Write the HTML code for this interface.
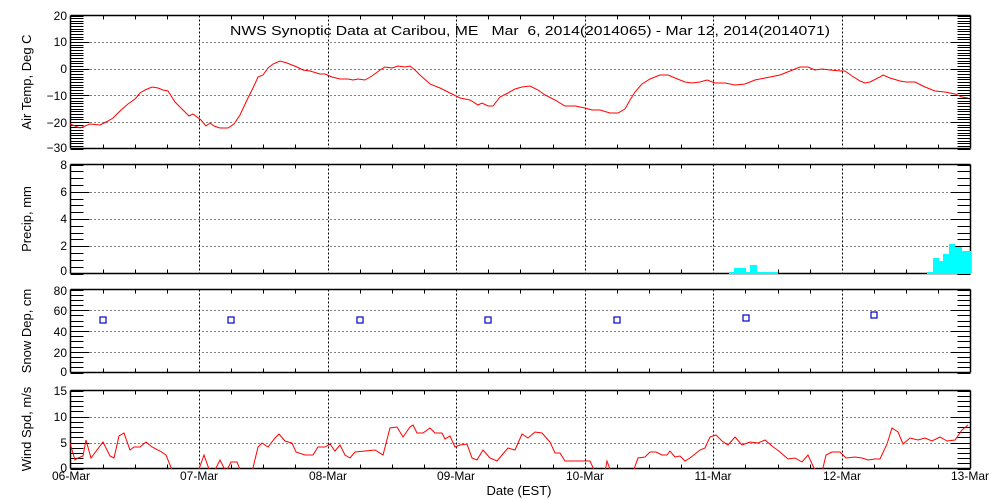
<!DOCTYPE html>
<html><head><meta charset="utf-8"><style>
html,body{margin:0;padding:0;background:#fff;}
svg{display:block;font-family:"Liberation Sans",sans-serif;}
text{font-size:12px;fill:#000;}
</style></head><body>
<svg id="s" width="1000" height="500" xmlns="http://www.w3.org/2000/svg">
<defs>
<clipPath id="c1"><rect x="70" y="15" width="901" height="134"/></clipPath>
<clipPath id="c4"><rect x="70" y="390" width="901" height="79"/></clipPath>
</defs>
<g id="grid"></g>
<text x="230" y="35" textLength="600" lengthAdjust="spacingAndGlyphs" style="font-size:13px;white-space:pre" xml:space="preserve">NWS Synoptic Data at Caribou, ME   Mar  6, 2014(2014065) - Mar 12, 2014(2014071)</text>
<text transform="translate(31,82) rotate(-90)" text-anchor="middle" style="font-size:13px">Air Temp, Deg C</text>
<text transform="translate(31,219) rotate(-90)" text-anchor="middle" style="font-size:13px">Precip, mm</text>
<text transform="translate(31,331) rotate(-90)" text-anchor="middle" style="font-size:13px">Snow Dep, cm</text>
<text transform="translate(31,429) rotate(-90)" text-anchor="middle" style="font-size:13px">Wind Spd, m/s</text>
<g text-anchor="end" style="font-size:11px">
<text x="67" y="20">20</text><text x="67" y="46">10</text><text x="67" y="73">0</text><text x="67" y="100">−10</text><text x="67" y="127">−20</text><text x="67" y="152">−30</text>
<text x="67" y="169">8</text><text x="67" y="196">6</text><text x="67" y="223">4</text><text x="67" y="250">2</text><text x="67" y="275">0</text>
<text x="67" y="295">80</text><text x="67" y="315">60</text><text x="67" y="336">40</text><text x="67" y="357">20</text><text x="67" y="376">0</text>
<text x="67" y="395">15</text><text x="67" y="421">10</text><text x="67" y="447">5</text><text x="67" y="472">0</text>
</g>
<g text-anchor="middle" style="font-size:12px">
<text x="71" y="480">06-Mar</text><text x="199" y="480">07-Mar</text><text x="328" y="480">08-Mar</text><text x="456" y="480">09-Mar</text><text x="585" y="480">10-Mar</text><text x="713" y="480">11-Mar</text><text x="842" y="480">12-Mar</text><text x="970" y="480">13-Mar</text>
<text x="519" y="495" style="font-size:13px">Date (EST)</text>
</g>
<g fill="#00ffff">
<rect x="729" y="272" width="5" height="2"/><rect x="734" y="268" width="12" height="6"/><rect x="746" y="272" width="4" height="2"/><rect x="750" y="265" width="7" height="9"/><rect x="757" y="272" width="21" height="2"/>
<rect x="927" y="272" width="6" height="2"/><rect x="933" y="258" width="6" height="16"/><rect x="939" y="261" width="4" height="13"/><rect x="943" y="254" width="6" height="20"/><rect x="949" y="244" width="6" height="30"/><rect x="955" y="247" width="7" height="27"/><rect x="962" y="251" width="9" height="23"/>
</g>
<g fill="none" stroke="#0000cc" stroke-width="1.2">
<rect x="100" y="317" width="6" height="6"/><rect x="228" y="317" width="6" height="6"/><rect x="357" y="317" width="6" height="6"/><rect x="485" y="317" width="6" height="6"/><rect x="614" y="317" width="6" height="6"/><rect x="743" y="315" width="6" height="6"/><rect x="871" y="312" width="6" height="6"/>
</g>
<polyline clip-path="url(#c1)" fill="none" stroke="#ff0000" stroke-width="1" points="70,124 80,128 90,124 100,125 108,121 113,118 120,111 128,104 135,99 140,93 145,90 152,87 158,88 163,90 168,91 175,102 180,107 185,112 189,116 193,114 197,117 201,120 206,126 210,123 214,126 220,128 228,128 234,124 240,115 247,100 253,88 258,77 263,75 268,68 273,64 280,61 287,63 292,65 297,67 303,70 310,71 320,74 325,74 332,77 340,79 348,79 353,80 358,79 365,80 372,76 380,70 385,67 392,68 398,66 405,67 410,66 415,70 420,75 430,84 440,88 450,93 460,98 470,100 478,105 482,103 488,106 493,106 500,97 508,93 515,89 522,87 530,86 538,90 545,95 555,100 565,106 575,106 585,108 592,110 600,110 610,113 618,113 625,109 630,100 635,92 642,84 650,79 660,75 668,75 675,78 685,82 692,83 700,82 707,80 715,83 725,83 735,85 745,84 755,80 765,78 775,76 780,75 790,71 800,67 808,67 815,70 822,69 830,70 841,71 845,71 852,76 860,81 865,83 870,82 880,77 883,75 890,78 900,81 906,82 915,82 925,87 935,91 945,92 955,94 962,97 968,98"/>
<polyline clip-path="url(#c4)" fill="none" stroke="#ff0000" stroke-width="1" points="70,443 75,460 78,458 83,456 86,440 91,458 103,442 110,456 114,458 119,436 124,433 130,450 134,447 140,447 146,442 152,447 160,451 166,455 170,465 173,472 197,472 199,469 204,455 210,472 214,472 220,460 226,472 231,462 237,462 241,472 252,472 258,447 262,443 268,447 275,438 279,434 285,441 292,443 296,452 305,455 313,455 318,447 325,447 330,444 335,451 340,445 345,455 350,458 355,452 365,451 375,450 383,455 390,428 397,427 400,432 403,437 410,427 413,425 417,433 423,433 430,428 435,433 442,433 445,439 450,436 455,447 460,445 467,444 472,458 477,460 483,450 490,458 497,461 502,455 508,448 515,450 522,434 528,438 535,432 542,433 550,442 555,453 560,453 565,461 590,461 595,472 605,472 607,461 611,472 633,472 638,458 645,457 650,452 656,452 662,455 667,455 670,451 675,457 680,456 685,461 690,458 700,450 705,448 710,437 716,435 722,441 728,445 735,437 742,445 750,442 758,443 765,440 772,446 780,452 788,459 795,458 802,462 808,455 813,466 816,472 822,472 826,455 832,452 840,452 846,458 855,457 862,458 868,460 875,459 880,459 887,444 892,428 898,432 903,444 910,438 918,440 925,438 932,441 940,437 947,441 955,440 962,430 968,425"/>
</svg>
<script>
(function(){
var g=document.getElementById('grid'),NS='http://www.w3.org/2000/svg';
function L(x1,y1,x2,y2,dash,w){var l=document.createElementNS(NS,'line');l.setAttribute('x1',x1);l.setAttribute('y1',y1);l.setAttribute('x2',x2);l.setAttribute('y2',y2);l.setAttribute('stroke','#000');l.setAttribute('stroke-width',w||1);if(dash)l.setAttribute('stroke-dasharray',dash);g.appendChild(l);}
var X0=70.5,X1=970.5,D=128.57;
var P=[[15.5,148.5,50,10],[164.5,273.5,16,4],[289.5,372.5,16,4],[390.5,468.5,15,5]];
P.forEach(function(p){
 var t=p[0],b=p[1],n=p[2],m=p[3],h=(b-t)/n;
 for(var i=0;i<=n;i++){var y=Math.round(t+i*h)+0.5;
  var maj=(i%m==0);
  if(maj&&i>0&&i<n){L(X0,y,X1,y,'1,3');L(X0,y,X0+19,y);L(X1-19,y,X1,y);}
  else {L(X0,y,X0+13,y);L(X1-13,y,X1,y);}
 }
 for(var d=1;d<7;d++){var x=Math.round(X0+d*D)+0.5;L(x,t,x,b,'2,2');}
 for(var k=1;k<28;k++){if(k%4==0)continue;var x=Math.round(X0+k*D/4)+0.5;L(x,t,x,t+4);L(x,b-4,x,b);}
 L(X0,t,X1,t,null,1.5);L(X0,b,X1,b,null,1.5);L(X0,t,X0,b,null,1.5);L(X1,t,X1,b,null,1.5);
});
})();
</script>
</body></html>
